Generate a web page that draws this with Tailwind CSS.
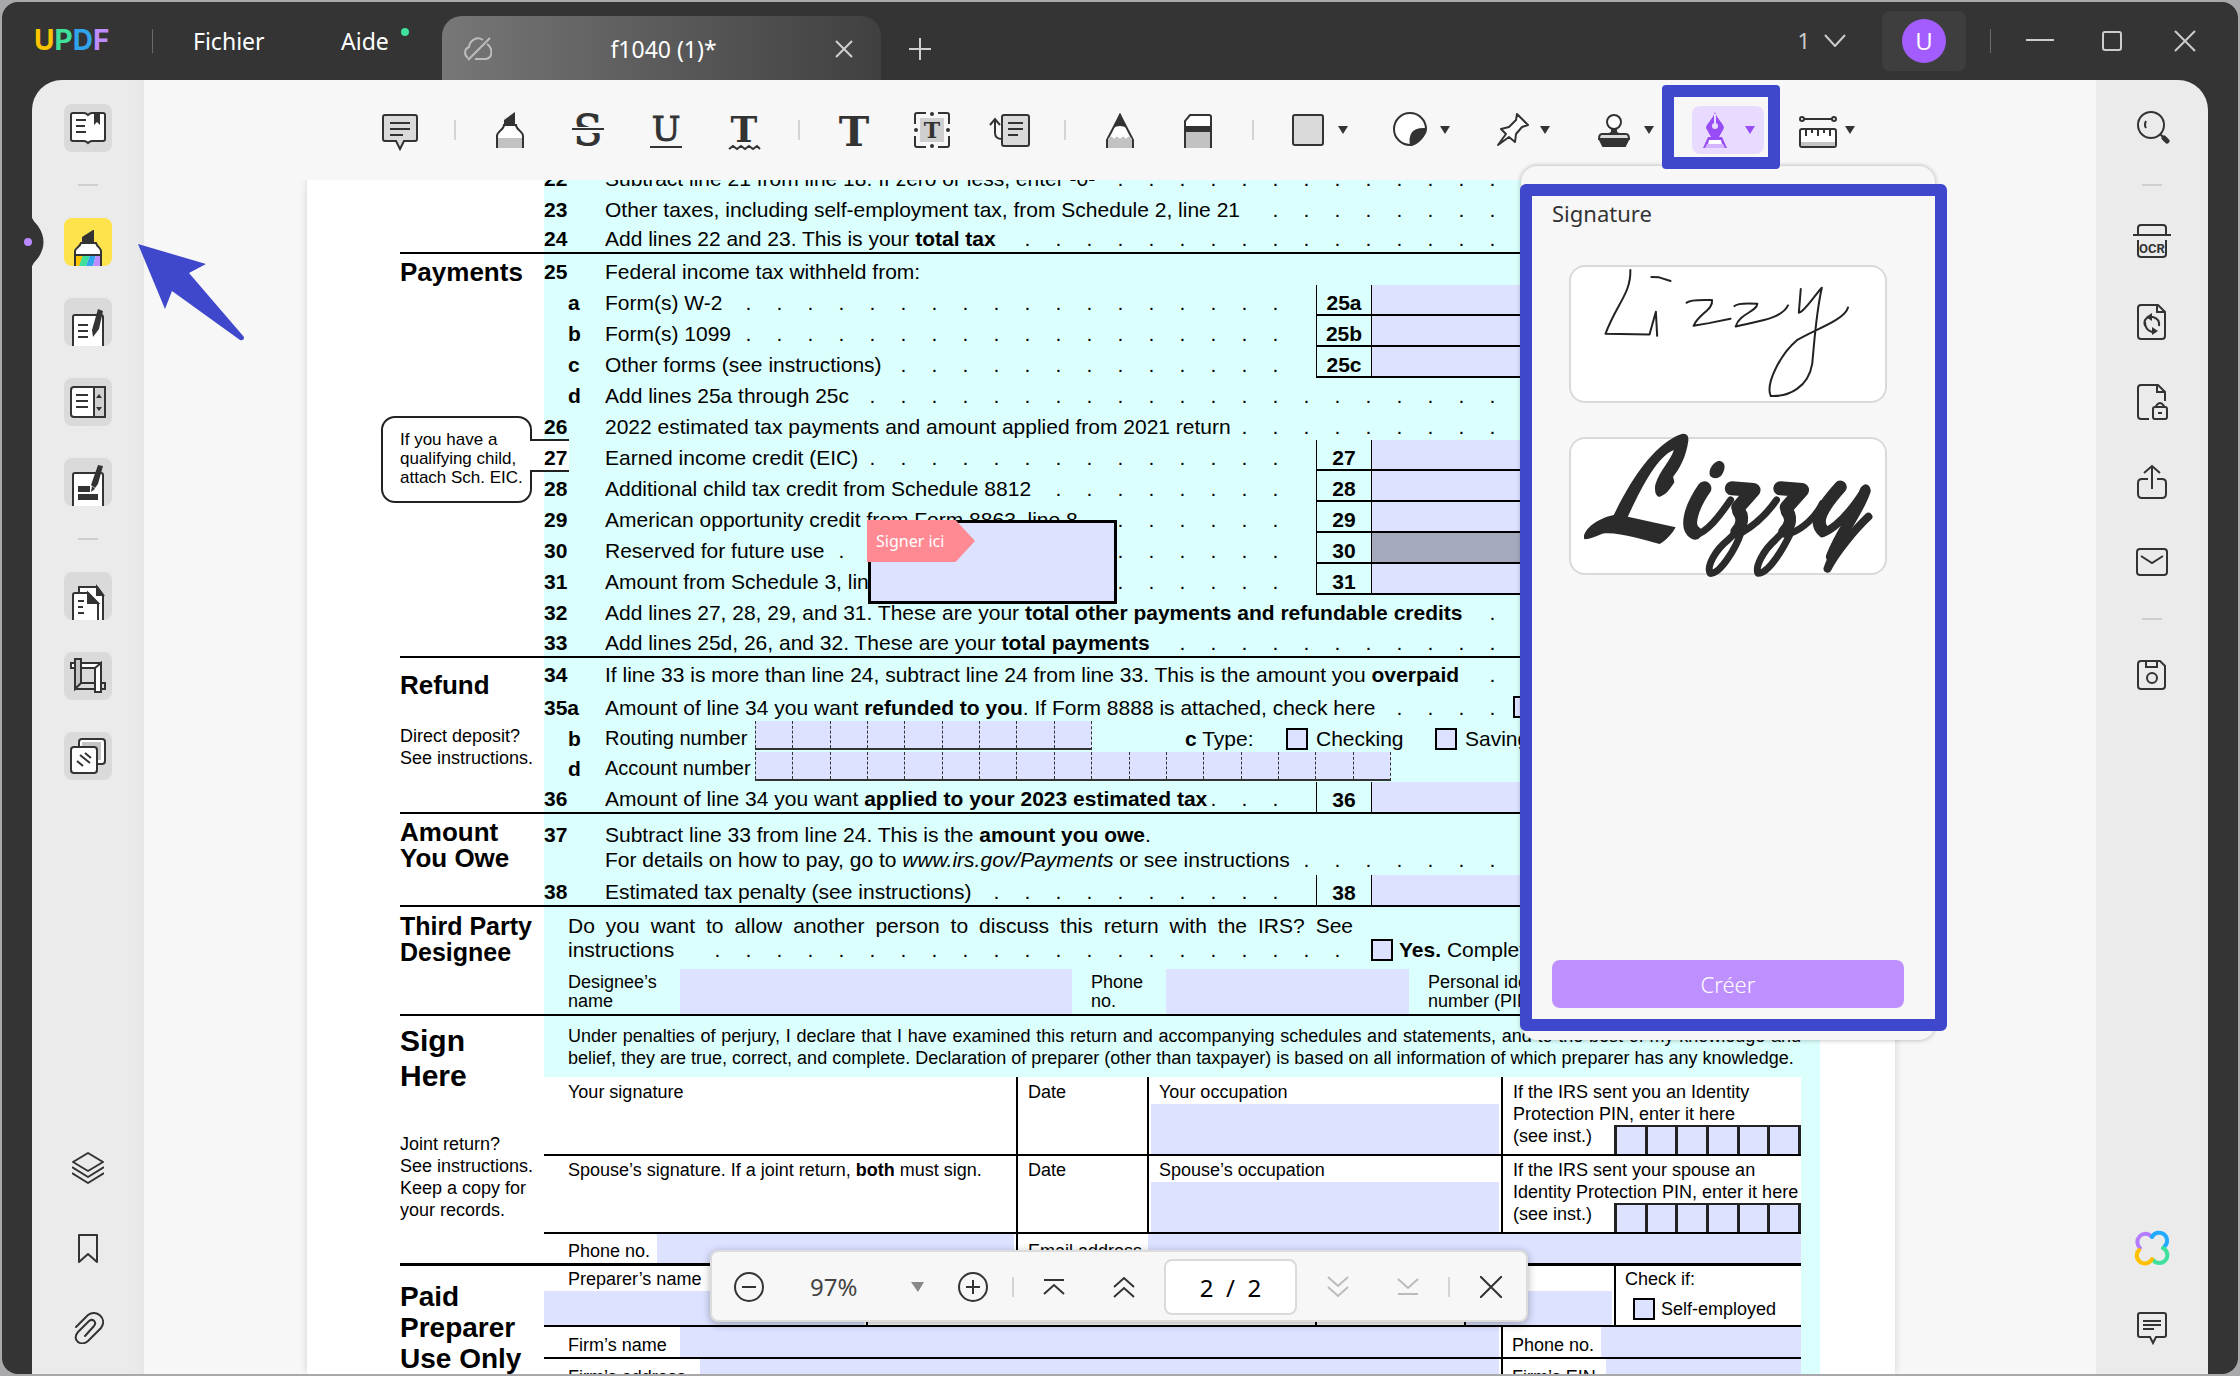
<!DOCTYPE html>
<html lang="fr">
<head>
    <meta charset="UTF-8">
    <meta name="viewport" content="width=device-width, initial-scale=1">
    <title>UPDF - f1040 (1)</title>
    <script src="https://cdn.jsdelivr.net/npm/@tailwindcss/browser@4"></script>
</head>
<body class="h-screen overflow-hidden bg-[#a9a9ab] p-[2px] font-['Noto_Sans',sans-serif] text-[#333]">

<div class="flex h-full flex-col overflow-hidden rounded-2xl bg-[#343434]">

    <!-- Title bar -->
    <header class="flex h-[78px] shrink-0 items-center text-2xl text-white">
        <div class="ml-8 w-[118px] font-['Inter',sans-serif] text-[28px] font-bold" aria-label="UPDF"><span class="text-[#ffc400]">U</span><span class="text-[#3fe09b]">P</span><span class="text-[#30a5ec]">D</span><span class="text-[#bd8cff]">F</span></div>
        <div class="h-6 w-px bg-[#6a6a6a]"></div>
        <button class="ml-10 w-[76px] text-left text-[23px]">Fichier</button>
        <button class="relative ml-[72px] w-[52px] text-left text-[23px]">Aide<span class="absolute -right-4 top-[2px] size-2 rounded-full bg-[#3fe09b]"></span></button>
        <div class="ml-[49px] mt-[14px] flex h-16 w-[439px] items-center self-start rounded-t-[20px] bg-linear-to-r from-[#777] to-[#404040] pl-[22px] pr-7 pt-[2px]">
            <svg class="h-6 w-7" viewBox="0 0 28 24" fill="none" stroke="#bdbdbd" stroke-width="2"><path d="M4 21C0 18 0 12 5 10C6 3 13-1 19 3M23 7C29 11 29 21 22 22H11M26 1L4 23"/></svg>
            <span class="flex-1 text-center text-[23px]">f1040 (1)*</span>
            <button aria-label="Fermer l'onglet"><svg class="size-[18px]" viewBox="0 0 18 18" stroke="#d0d0d0" stroke-width="2"><path d="M1 1l16 16M17 1L1 17"/></svg></button>
        </div>
        <button class="ml-7" aria-label="Nouvel onglet"><svg class="mt-4 size-[22px]" viewBox="0 0 22 22" stroke="#d0d0d0" stroke-width="2"><path d="M11 0v22M0 11h22"/></svg></button>
        <button class="ml-auto flex items-center gap-[14px] text-[22px] text-[#ccc]">1
            <svg class="h-[13px] w-[22px]" viewBox="0 0 22 13" fill="none" stroke="#ccc" stroke-width="2"><path d="M1 1l10 11L21 1"/></svg>
        </button>
        <button class="ml-9 flex h-[60px] w-[84px] items-center justify-center rounded-lg bg-[#3e3e3e]"><span class="size-11 rounded-full bg-[#a35dff] text-center font-['Open_Sans',sans-serif] text-2xl leading-[44px]">U</span></button>
        <div class="ml-6 h-6 w-px bg-[#6a6a6a]"></div>
        <button class="ml-[35px]" aria-label="Réduire"><svg class="h-5 w-7" viewBox="0 0 28 20" stroke="#ccc" stroke-width="2"><path d="M0 9h28"/></svg></button>
        <button class="ml-12" aria-label="Agrandir"><svg class="size-5" viewBox="0 0 20 20" fill="none" stroke="#ccc" stroke-width="2"><rect x="1" y="1" width="18" height="18" rx="2"/></svg></button>
        <button class="ml-[52px] mr-[42px]" aria-label="Fermer"><svg class="size-[22px]" viewBox="0 0 22 22" stroke="#ccc" stroke-width="2"><path d="M1 1l20 20M21 1L1 21"/></svg></button>
    </header>

    <div class="relative mx-[30px] flex min-h-0 flex-1">

        <!-- Left tools -->
        <nav class="flex w-28 shrink-0 flex-col items-center rounded-tl-[30px] bg-linear-to-r from-[#ebebeb] from-90% to-[#e6e6e6] pb-[30px] pt-6">
            <button class="size-12 rounded-lg bg-[#dadada] p-[6px]" aria-label="Lecteur">
                <svg viewBox="0 0 36 36" fill="#fff" stroke="#333" stroke-width="2"><path d="M3 3h11q2 0 4 2q2-2 4-2h11q2 0 2 2v24q0 2-2 2H22q-2 0-4 2q-2-2-4-2H3q-2 0-2-2V5q0-2 2-2z"/><path d="M6 10h10M6 16h9M6 22h10"/><path fill="#333" stroke="none" d="M24 3h6v12l-3-3-3 3z"/></svg>
            </button>
            <div class="my-8 h-[2px] w-5 bg-[#cfcfcf]"></div>
            <div class="flex flex-col gap-8">
                <button class="size-12 overflow-hidden rounded-lg bg-[#ffe34d]" aria-label="Commenter">
                    <svg viewBox="0 0 48 48"><path fill="#333" d="M18 25v-6l11-7h1v13z"/><path fill="#fff" stroke="#333" stroke-width="2" d="M17 25h15c1 4 5 5 5 8v17H11V33c0-3 5-4 6-8z"/><path fill="#ffc400" d="M12 37h8l-4 11h-4z"/><path fill="#3fe09b" d="M19 37h7l-4 11h-7z"/><path fill="#30a5ec" d="M26 37h6l-3 11h-7z"/><path fill="#bd8cff" d="M32 37h4v11h-7z"/><path stroke="#333" stroke-width="2" d="M11 37h26"/></svg>
                </button>
                <button class="size-12 overflow-hidden rounded-lg bg-[#dadada]" aria-label="Modifier">
                    <svg viewBox="0 0 48 48"><path fill="#fff" stroke="#333" stroke-width="2" d="M9 50V19q0-2 2-2h26q2 0 2 2v31"/><path stroke="#333" stroke-width="2" d="M14 27h10M14 33h10M14 39h10"/><path fill="#333" d="M34 11l5 2-4 18-6 8-1-7z"/></svg>
                </button>
                <button class="size-12 rounded-lg bg-[#dadada] p-[6px]" aria-label="Formulaire">
                    <svg viewBox="0 0 36 36" fill="none" stroke="#333" stroke-width="2"><rect x="1" y="3" width="34" height="30" rx="3" fill="#fff"/><path fill="#d0d0d0" d="M24 3h11v30H24z"/><path d="M6 11h12M6 17h12M6 23h12"/><path fill="#333" stroke="none" d="M26 14l3-4 3 4zM26 23l3 4 3-4z"/></svg>
                </button>
                <button class="size-12 overflow-hidden rounded-lg bg-[#dadada]" aria-label="Masquer">
                    <svg viewBox="0 0 48 48"><path fill="#fff" stroke="#333" stroke-width="2" d="M9 50V17q0-2 2-2h26q2 0 2 2v33"/><path fill="#333" d="M14 28h12v6H14zM14 36h20v6H14zM34 7l5 1-5 18-3 4-4-3z"/><path fill="#333" d="M28 28l3 3-4 3z"/></svg>
                </button>
            </div>
            <div class="my-8 h-[2px] w-5 bg-[#cfcfcf]"></div>
            <div class="flex flex-col gap-8">
                <button class="size-12 overflow-hidden rounded-lg bg-[#dadada]" aria-label="Pages">
                    <svg viewBox="0 0 48 48" fill="#fff" stroke="#333" stroke-width="2"><path d="M15 50V15h18l6 8v27z"/><path fill="#333" d="M33 15v8h6z"/><path d="M9 50V23q0-2 2-2h13l10 11v18z"/><path fill="#333" d="M24 21v10h10z"/><path d="M14 29h6M14 35h5M14 41h6"/></svg>
                </button>
                <button class="size-12 rounded-lg bg-[#dadada] p-[6px]" aria-label="Recadrer">
                    <svg viewBox="0 0 36 36" fill="none" stroke="#333" stroke-width="2"><path fill="#fff" d="M1 5h30v5H1z"/><path fill="#dadada" d="M5 25h30v6H5zM11 10h15v15H11z"/><path fill="#c4c4c4" d="M5 1h6v24l-6 6z"/><path fill="#fff" d="M25 10l6-5v29h-6z"/></svg>
                </button>
                <button class="size-12 rounded-lg bg-[#dadada] p-[6px]" aria-label="Filigrane">
                    <svg viewBox="0 0 36 36" fill="#fff" stroke="#333" stroke-width="2"><rect x="9" y="1" width="26" height="25" rx="3"/><path fill="#c4c4c4" stroke="none" d="M12 4h19v18H12z"/><rect x="1" y="9" width="26" height="26" rx="3"/><path d="M10 17l10 8M15 15l6 5M7 23l6 5"/></svg>
                </button>
            </div>
            <div class="mt-auto flex flex-col gap-[48px]">
                <button class="size-8" aria-label="Calques"><svg viewBox="0 0 32 32" fill="none" stroke="#333" stroke-width="2" stroke-linejoin="round"><path d="M16 1l15 9-15 9L1 10zM0 15l16 10 16-10M0 21l16 10 16-10"/></svg></button>
                <button class="size-8" aria-label="Signets"><svg viewBox="0 0 32 32" fill="none" stroke="#333" stroke-width="2" stroke-linejoin="round"><path d="M7 3h18v27l-9-8-9 8z"/></svg></button>
                <button class="size-8" aria-label="Pièces jointes"><svg viewBox="0 0 32 32" fill="none" stroke="#333" stroke-width="2" stroke-linecap="round"><path d="M4 15L16 3c8-6 20 3 13 13L16 29C9 35-1 28 6 20L17 9c4-3 8 1 5 5l-9 10"/></svg></button>
            </div>
        </nav>

        <main class="relative flex min-w-0 flex-1 flex-col overflow-hidden bg-[#f7f7f7]">

            <!-- Comment toolbar -->
            <div class="flex h-[100px] shrink-0 items-center pl-[217px]">
                <button class="flex w-[78px] justify-center" aria-label="Note">
                    <svg class="size-9 overflow-visible" viewBox="0 0 36 36" stroke="#333" stroke-width="2" fill="none"><path fill="#dadada" d="M3 3h30q2 0 2 2v22q0 2-2 2H22l-4 8-4-8H3q-2 0-2-2V5q0-2 2-2z"/><path d="M8 11h20M8 17h20M8 23h13"/></svg>
                </button>
                <div class="mx-[15px] h-5 w-[2px] bg-[#d4d4d4]"></div>
                <button class="flex w-[78px] justify-center" aria-label="Surligner">
                    <svg class="size-9" viewBox="0 0 36 36"><path fill="#fff" stroke="#333" stroke-width="2" d="M12 13h12c0 5 7 6 7 11v13H5V24c0-5 7-6 7-11z"/><path fill="#c2c2c2" d="M6 26h24v10H6z"/><path fill="#333" d="M12 13V8l11-8v13z"/></svg>
                </button>
                <button class="flex w-[78px] justify-center" aria-label="Barrer">
                    <svg class="size-9 overflow-visible" viewBox="0 0 36 36"><text x="18" y="33" text-anchor="middle" font-family="DejaVu Serif" font-size="42" fill="#333" stroke="#333">S</text><path stroke="#f7f7f7" stroke-width="6" d="M0 18h36"/><path stroke="#333" stroke-width="2" d="M2 17h32"/></svg>
                </button>
                <button class="flex w-[78px] justify-center" aria-label="Souligner">
                    <svg class="size-9 overflow-visible" viewBox="0 0 36 36"><text x="18" y="29" text-anchor="middle" font-family="DejaVu Serif" font-size="34" fill="#333" stroke="#333">U</text><path stroke="#333" stroke-width="2" d="M2 35h32"/></svg>
                </button>
                <button class="flex w-[78px] justify-center" aria-label="Ondulé">
                    <svg class="size-9 overflow-visible" viewBox="0 0 36 36"><text x="18" y="30" text-anchor="middle" font-family="DejaVu Serif" font-weight="bold" font-size="36" fill="#333">T</text><path fill="none" stroke="#333" stroke-width="2" d="M3 37l4-3 4 3 4-3 4 3 4-3 4 3 4-3 3 3"/></svg>
                </button>
                <div class="mx-[15px] h-5 w-[2px] bg-[#d4d4d4]"></div>
                <button class="flex w-[78px] justify-center" aria-label="Texte">
                    <svg class="size-9 overflow-visible" viewBox="0 0 36 36"><text x="18" y="34" text-anchor="middle" font-family="DejaVu Serif" font-weight="bold" font-size="41" fill="#333">T</text></svg>
                </button>
                <button class="flex w-[78px] justify-center" aria-label="Zone de texte">
                    <svg class="size-9 overflow-visible" viewBox="0 0 36 36" fill="none" stroke="#333" stroke-width="2"><path fill="#cfcfcf" stroke="none" d="M6 6h24v24H6z"/><path d="M1 12V3q0-2 2-2h9M24 1h9q2 0 2 2v9M35 24v9q0 2-2 2h-9M12 35H3q-2 0-2-2v-9"/><g fill="#333" stroke="none"><circle cx="18" cy="2" r="2"/><circle cx="18" cy="34" r="2"/><circle cx="2" cy="18" r="2"/><circle cx="34" cy="18" r="2"/><text x="18" y="26" text-anchor="middle" font-family="DejaVu Serif" font-weight="bold" font-size="22">T</text></g></svg>
                </button>
                <button class="flex w-[78px] justify-center" aria-label="Légende">
                    <svg class="h-9 w-10 overflow-visible" viewBox="0 0 40 36" fill="none" stroke="#333" stroke-width="2"><rect x="12" y="3" width="27" height="31" rx="2" fill="#dadada"/><path d="M18 11h15M18 17h15M18 23h10M0 13l5-6 5 6M5 7v14q0 6 7 6"/></svg>
                </button>
                <div class="mx-[15px] h-5 w-[2px] bg-[#d4d4d4]"></div>
                <button class="flex w-[78px] justify-center" aria-label="Crayon">
                    <svg class="size-9" viewBox="0 0 36 36"><path fill="#fff" stroke="#333" stroke-width="2" d="M18 3l13 25v9H5v-9z"/><path fill="#c2c2c2" d="M6 27q3-5 6 0q3-5 6 0q3-5 6 0q3-5 6 0v9H6z"/><path fill="#333" d="M18 1l7 15q-7-4-14 0z"/></svg>
                </button>
                <button class="flex w-[78px] justify-center" aria-label="Gomme">
                    <svg class="size-9" viewBox="0 0 36 36"><path fill="#fff" stroke="#333" stroke-width="2" d="M5 37V9l5-6h19q2 0 2 2v32z"/><path fill="#333" d="M4 14h28v6H4z"/><path fill="#c2c2c2" d="M6 20h24v16H6z"/></svg>
                </button>
                <div class="mx-[15px] h-5 w-[2px] bg-[#d4d4d4]"></div>
                <button class="flex w-[102px] items-center gap-3 pl-[21px]" aria-label="Formes">
                    <svg class="size-9" viewBox="0 0 36 36"><rect x="3" y="3" width="30" height="30" rx="2" fill="#dadada" stroke="#333" stroke-width="2"/></svg>
                    <svg class="h-2 w-[10px]" viewBox="0 0 10 8" fill="#333"><path d="M0 0h10L5 8z"/></svg>
                </button>
                <button class="flex w-[102px] items-center gap-3 pl-[21px]" aria-label="Autocollants">
                    <svg class="size-9" viewBox="0 0 36 36"><path fill="#fff" stroke="#333" stroke-width="2" d="M18 1a16 16 0 0 1 16 16c0 6-10 16-16 16a16 16 0 0 1 0-32z"/><path fill="#333" d="M34 16c-14-1-18 6-16 18c8-1 16-9 16-18z"/></svg>
                    <svg class="h-2 w-[10px]" viewBox="0 0 10 8" fill="#333"><path d="M0 0h10L5 8z"/></svg>
                </button>
                <button class="flex w-[102px] items-center gap-[10px] pl-[21px]" aria-label="Épingle">
                    <svg class="size-9" viewBox="0 0 36 36" fill="#fff" stroke="#333" stroke-width="2" stroke-linejoin="round"><path d="M23 2l11 11-6 2-6 7-1 8-6-5-11 8 8-11-5-5 8-2 7-7z"/></svg>
                    <svg class="h-2 w-[10px]" viewBox="0 0 10 8" fill="#333"><path d="M0 0h10L5 8z"/></svg>
                </button>
                <button class="flex w-[102px] items-center gap-3 pl-[21px]" aria-label="Tampon">
                    <svg class="size-9" viewBox="0 0 36 36" stroke="#333" stroke-width="2"><circle cx="18" cy="10" r="7" fill="#fff"/><path fill="#333" d="M16 17h4v2q0 3 5 3H11q5 0 5-3z"/><path fill="#dadada" d="M6 22h24q3 0 3 5H3q0-5 3-5z"/><path fill="#333" d="M4 28h28l-3 6H7z"/></svg>
                    <svg class="h-2 w-[10px]" viewBox="0 0 10 8" fill="#333"><path d="M0 0h10L5 8z"/></svg>
                </button>
                <button class="flex w-[102px] items-center pl-[15px]" aria-label="Signature">
                    <span class="flex h-12 w-[72px] items-center gap-3 rounded-lg bg-[#e9dbff] pl-[5px]">
                        <svg class="size-9" viewBox="0 0 36 36" fill="#984cf5"><path d="M18 0c2 7 9 12 9 16l-5 9h-8l-5-9c0-4 7-9 9-16z"/><path stroke="#e9dbff" stroke-width="2" d="M18 2v11"/><circle cx="18" cy="14" r="3" fill="#e9dbff"/><path d="M11 25h14l5 11H6z"/><path fill="#fff" d="M12 28h12l1 4H11z"/><path fill="#d4b3ff" d="M10 32h16l2 4H8z"/></svg>
                        <svg class="h-2 w-[10px]" viewBox="0 0 10 8" fill="#984cf5"><path d="M0 0h10L5 8z"/></svg>
                    </span>
                </button>
                <button class="flex items-center gap-2 pl-[20px]" aria-label="Mesurer">
                    <svg class="h-9 w-[38px]" viewBox="0 0 38 36" fill="none" stroke="#333" stroke-width="2"><path d="M4 7h30"/><circle cx="3" cy="7" r="2" fill="#fff"/><circle cx="35" cy="7" r="2" fill="#fff"/><rect x="1" y="17" width="36" height="18" rx="2" fill="#fff"/><path fill="#c4c4c4" stroke="none" d="M2 30h34v4H2z"/><path d="M7 17v7M13 17v4M19 17v7M25 17v4M31 17v7"/></svg>
                    <svg class="h-2 w-[10px]" viewBox="0 0 10 8" fill="#333"><path d="M0 0h10L5 8z"/></svg>
                </button>
            </div>

            <!-- Form 1040, page 2 -->
            <div class="min-h-0 flex-1 overflow-hidden pl-[163px] pr-[201px]">
                <article lang="en" class="relative h-full overflow-hidden bg-white pl-[93px] pr-[75px] font-['Liberation_Sans',Arial,sans-serif] text-[21px] leading-[27px] text-black shadow-[0_0_8px_rgba(0,0,0,0.14)]">

                    <section class="-mt-[19px] flex border-b-2 whitespace-nowrap">
                        <div class="w-36 shrink-0"></div>
                        <div class="min-w-0 flex-1 bg-[#dbfffc]">
                            <div class="flex h-[31px] items-end"><b class="w-[61px] shrink-0">22</b>Subtract line 21 from line 18. If zero or less, enter -0-<span class="ml-auto mr-[312px] flex min-w-0 justify-end overflow-hidden" data-dots="13"></span></div>
                            <div class="flex h-[31px] items-end"><b class="w-[61px] shrink-0">23</b>Other taxes, including self-employment tax, from Schedule 2, line 21<span class="ml-auto mr-[312px] flex min-w-0 justify-end overflow-hidden" data-dots="8"></span></div>
                            <div class="flex h-[29px] items-end"><b class="w-[61px] shrink-0">24</b><p>Add lines 22 and 23. This is your <b>total tax</b></p><span class="ml-auto mr-[312px] flex min-w-0 justify-end overflow-hidden" data-dots="16"></span></div>
                        </div>
                    </section>

                    <section class="relative flex border-b-2 whitespace-nowrap">
                        <h2 class="w-36 shrink-0 pt-[5px] text-[26px] font-bold">Payments</h2>
                        <div class="min-w-0 flex-1 bg-[#dbfffc]">
                            <div class="flex h-[31px] items-end"><b class="w-[61px] shrink-0">25</b>Federal income tax withheld from:</div>
                            <div class="flex h-[31px] items-end"><b class="w-[61px] shrink-0 pl-6">a</b>Form(s) W-2<span class="ml-auto mr-[25px] flex min-w-0 justify-end overflow-hidden" data-dots="18"></span><b class="w-14 shrink-0 self-stretch border-x border-b-2 pt-[4px] text-center">25a</b><input aria-label="25a" class="w-[448px] shrink-0 self-stretch border-b-2 border-black bg-[#dce2ff]"></div>
                            <div class="flex h-[31px] items-end"><b class="w-[61px] shrink-0 pl-6">b</b>Form(s) 1099<span class="ml-auto mr-[25px] flex min-w-0 justify-end overflow-hidden" data-dots="18"></span><b class="w-14 shrink-0 self-stretch border-x border-b-2 pt-[4px] text-center">25b</b><input aria-label="25b" class="w-[448px] shrink-0 self-stretch border-b-2 border-black bg-[#dce2ff]"></div>
                            <div class="flex h-[31px] items-end"><b class="w-[61px] shrink-0 pl-6">c</b>Other forms (see instructions)<span class="ml-auto mr-[25px] flex min-w-0 justify-end overflow-hidden" data-dots="13"></span><b class="w-14 shrink-0 self-stretch border-x border-b-2 pt-[4px] text-center">25c</b><input aria-label="25c" class="w-[448px] shrink-0 self-stretch border-b-2 border-black bg-[#dce2ff]"></div>
                            <div class="flex h-[31px] items-end"><b class="w-[61px] shrink-0 pl-6">d</b>Add lines 25a through 25c<span class="ml-auto mr-[312px] flex min-w-0 justify-end overflow-hidden" data-dots="21"></span></div>
                            <div class="flex h-[31px] items-end"><b class="w-[61px] shrink-0">26</b>2022 estimated tax payments and amount applied from 2021 return<span class="ml-auto mr-[312px] flex min-w-0 justify-end overflow-hidden" data-dots="9"></span></div>
                            <div class="flex h-[31px] items-end"><b class="w-[61px] shrink-0">27</b>Earned income credit (EIC)<span class="ml-auto mr-[25px] flex min-w-0 justify-end overflow-hidden" data-dots="14"></span><b class="w-14 shrink-0 self-stretch border-x border-b-2 pt-[4px] text-center">27</b><input aria-label="27" class="w-[448px] shrink-0 self-stretch border-b-2 border-black bg-[#dce2ff]"></div>
                            <div class="flex h-[31px] items-end"><b class="w-[61px] shrink-0">28</b>Additional child tax credit from Schedule 8812<span class="ml-auto mr-[25px] flex min-w-0 justify-end overflow-hidden" data-dots="8"></span><b class="w-14 shrink-0 self-stretch border-x border-b-2 pt-[4px] text-center">28</b><input aria-label="28" class="w-[448px] shrink-0 self-stretch border-b-2 border-black bg-[#dce2ff]"></div>
                            <div class="flex h-[31px] items-end"><b class="w-[61px] shrink-0">29</b>American opportunity credit from Form 8863, line 8<span class="ml-auto mr-[25px] flex min-w-0 justify-end overflow-hidden" data-dots="6"></span><b class="w-14 shrink-0 self-stretch border-x border-b-2 pt-[4px] text-center">29</b><input aria-label="29" class="w-[448px] shrink-0 self-stretch border-b-2 border-black bg-[#dce2ff]"></div>
                            <div class="flex h-[31px] items-end"><b class="w-[61px] shrink-0">30</b>Reserved for future use<span class="ml-auto mr-[25px] flex min-w-0 justify-end overflow-hidden" data-dots="15"></span><b class="w-14 shrink-0 self-stretch border-x border-b-2 pt-[4px] text-center">30</b><div class="w-[448px] shrink-0 self-stretch border-b-2 bg-[#a4a9bd]"></div></div>
                            <div class="flex h-[31px] items-end"><b class="w-[61px] shrink-0">31</b>Amount from Schedule 3, line 15<span class="ml-auto mr-[25px] flex min-w-0 justify-end overflow-hidden" data-dots="11"></span><b class="w-14 shrink-0 self-stretch border-x border-b-2 pt-[4px] text-center">31</b><input aria-label="31" class="w-[448px] shrink-0 self-stretch border-b-2 border-black bg-[#dce2ff]"></div>
                            <div class="flex h-[31px] items-end"><b class="w-[61px] shrink-0">32</b><p>Add lines 27, 28, 29, and 31. These are your <b>total other payments and refundable credits</b></p><span class="ml-auto mr-[312px] flex min-w-0 justify-end overflow-hidden" data-dots="1"></span></div>
                            <div class="flex h-[30px] items-end"><b class="w-[61px] shrink-0">33</b><p>Add lines 25d, 26, and 32. These are your <b>total payments</b></p><span class="ml-auto mr-[312px] flex min-w-0 justify-end overflow-hidden" data-dots="11"></span></div>
                        </div>

                        <!-- EIC callout, its tail runs to line 27 -->
                        <div class="absolute -left-[19px] top-[162px] h-[87px] w-[151px] rounded-[14px] border-2 border-[#222] bg-white pl-[17px] pt-[12px] text-[17px] leading-[19px]">If you have a<br>qualifying child,<br>attach Sch. EIC.</div>
                        <div class="absolute left-[130px] top-[185px] h-[33px] w-[39px] border-y-2 border-[#222] bg-white pl-[14px] pt-[3px] font-bold">27</div>

                        <!-- Signature field -->
                        <div class="absolute left-[468px] top-[266px] h-[84px] w-[249px] border-3 bg-[#dce2ff]"></div>
                        <div class="absolute left-[467px] top-[266px] h-[42px] w-[108px] bg-[#ff8a94] pl-[9px] font-['Noto_Sans',sans-serif] text-base leading-[42px] text-white [clip-path:polygon(0_0,82%_0,100%_50%,82%_100%,0_100%)]">Signer ici</div>
                    </section>

                    <section class="flex border-b-2 whitespace-nowrap">
                        <div class="w-36 shrink-0">
                            <h2 class="pt-[14px] text-[26px] font-bold">Refund</h2>
                            <p class="pt-[26px] text-lg leading-[22px]">Direct deposit?<br>See instructions.</p>
                        </div>
                        <div class="min-w-0 flex-1 bg-[#dbfffc]">
                            <div class="flex h-8 items-center"><b class="w-[61px] shrink-0">34</b><p>If line 33 is more than line 24, subtract line 24 from line 33. This is the amount you <b>overpaid</b></p><span class="ml-auto mr-[312px] flex min-w-0 justify-end overflow-hidden" data-dots="1"></span></div>
                            <div class="flex h-[31px] items-end"><b class="w-[61px] shrink-0">35a</b><p>Amount of line 34 you want <b>refunded to you</b>. If Form 8888 is attached, check here</p><span class="ml-auto mr-[5px] flex min-w-0 justify-end overflow-hidden" data-dots="4"></span><input type="checkbox" aria-label="Form 8888" class="mb-[3px] mr-[285px] size-[22px] shrink-0 appearance-none border-2 bg-[#dce2ff]"></div>
                            <div class="flex h-[31px] items-end">
                                <b class="w-[61px] shrink-0 pl-6">b</b><span class="w-[150px] text-xl leading-[27px]">Routing number</span>
                                <div class="grid h-[29px] w-[337px] grid-cols-9 self-start border-b-2 border-r border-[#333] bg-[#dce2ff] [border-right-style:dashed]" data-cells="9"></div>
                                <p class="ml-[93px] w-[101px]"><b>c</b> Type:</p>
                                <label class="flex w-[149px] items-center gap-2"><input type="checkbox" class="size-[22px] appearance-none border-2 bg-[#dce2ff]">Checking</label>
                                <label class="flex items-center gap-2"><input type="checkbox" class="size-[22px] appearance-none border-2 bg-[#dce2ff]">Savings</label>
                            </div>
                            <div class="flex h-[30px] items-end">
                                <b class="w-[61px] shrink-0 pl-6">d</b><span class="w-[150px] text-xl leading-[27px]">Account number</span>
                                <div class="grid h-[29px] w-[636px] grid-cols-17 self-start border-b-2 border-r border-[#333] bg-[#dce2ff] [border-right-style:dashed]" data-cells="17"></div>
                            </div>
                            <div class="flex h-[30px] items-end"><b class="w-[61px] shrink-0">36</b><p>Amount of line 34 you want <b>applied to your 2023 estimated tax</b></p><span class="ml-auto mr-[25px] flex min-w-0 justify-end overflow-hidden" data-dots="3"></span><b class="w-14 shrink-0 self-stretch border-x pt-[4px] text-center">36</b><input aria-label="36" class="w-[448px] shrink-0 self-stretch bg-[#dce2ff]"></div>
                        </div>
                    </section>

                    <section class="flex border-b-2 whitespace-nowrap">
                        <h2 class="w-36 shrink-0 pt-[5px] text-[26px] font-bold leading-[26px]">Amount<br>You Owe</h2>
                        <div class="min-w-0 flex-1 bg-[#dbfffc] pt-[8px]">
                            <div class="flex h-[25px] items-center"><b class="w-[61px] shrink-0">37</b><p>Subtract line 33 from line 24. This is the <b>amount you owe</b>.</p></div>
                            <div class="mb-[3px] flex h-[25px] items-center pl-[61px]"><p>For details on how to pay, go to <i>www.irs.gov/Payments</i> or see instructions</p><span class="ml-auto mr-[312px] flex min-w-0 justify-end overflow-hidden" data-dots="7"></span></div>
                            <div class="flex h-[30px] items-end"><b class="w-[61px] shrink-0">38</b>Estimated tax penalty (see instructions)<span class="ml-auto mr-[25px] flex min-w-0 justify-end overflow-hidden" data-dots="10"></span><b class="w-14 shrink-0 self-stretch border-x pt-[4px] text-center">38</b><input aria-label="38" class="w-[448px] shrink-0 self-stretch bg-[#dce2ff]"></div>
                        </div>
                    </section>

                    <section class="flex border-b-2 whitespace-nowrap">
                        <h2 class="w-36 shrink-0 pt-[6px] text-[25px] font-bold leading-[26px]">Third Party<br>Designee</h2>
                        <div class="min-w-0 flex-1 bg-[#dbfffc] pl-6 pt-[7px] leading-[24px]">
                            <div class="flex">
                                <div class="w-[785px] shrink-0">
                                    <p class="[text-align-last:justify]">Do you want to allow another person to discuss this return with the IRS? See</p>
                                    <div class="flex">instructions<span class="ml-auto flex" data-dots="21"></span></div>
                                </div>
                                <label class="ml-[18px] flex items-center gap-[6px] self-end"><input type="checkbox" class="size-[22px] appearance-none border-2 bg-[#dce2ff]"><span><b>Yes.</b> Complete below.</span></label>
                            </div>
                            <div class="mt-[7px] flex h-[45px] items-center text-lg leading-[19px]">
                                <label for="designee" class="w-28">Designee’s<br>name</label>
                                <input id="designee" class="h-full w-[392px] bg-[#dce2ff]">
                                <label for="dphone" class="w-[94px] pl-[19px]">Phone<br>no.</label>
                                <input id="dphone" class="h-full w-[243px] bg-[#dce2ff]">
                                <p class="pl-[19px]">Personal identification<br>number (PIN)</p>
                            </div>
                        </div>
                    </section>

                    <!-- Sign here -->
                    <div class="border-r-[19px] border-[#dbfffc] text-lg leading-[22px]">
                        <section class="flex border-b-3 border-black">
                            <div class="w-36 shrink-0">
                                <h2 class="pt-[7px] text-[30px] font-bold leading-[35px]">Sign<br>Here</h2>
                                <p class="pt-[40px] whitespace-nowrap">Joint return?<br>See instructions.<br>Keep a copy for<br>your records.</p>
                            </div>
                            <div class="min-w-0 flex-1 whitespace-nowrap">
                                <div class="h-[61px] bg-[#dbfffc] pl-6 pt-[9px]">
                                    <p class="[text-align-last:justify]">Under penalties of perjury, I declare that I have examined this return and accompanying schedules and statements, and to the best of my knowledge and</p>
                                    <p>belief, they are true, correct, and complete. Declaration of preparer (other than taxpayer) is based on all information of which preparer has any knowledge.</p>
                                </div>
                                <div class="flex h-[79px] border-b-2">
                                    <p class="w-[474px] border-r-2 pl-6 pt-[4px]">Your signature</p>
                                    <p class="w-[131px] border-r-2 pl-[10px] pt-[4px]">Date</p>
                                    <div class="flex min-w-0 flex-1 flex-col border-r-2 pt-[4px]"><label for="occ" class="h-[23px] pl-[10px]">Your occupation</label><input id="occ" class="mx-[2px] min-w-0 flex-1 bg-[#dce2ff]"></div>
                                    <div class="flex w-[298px] flex-col pl-[10px] pt-[4px]"><p>If the IRS sent you an Identity<br>Protection PIN, enter it here</p><div class="flex flex-1 justify-between">(see inst.)<div class="grid w-[187px] grid-cols-6 border-r-3 border-t-2 border-[#222] bg-[#dce2ff]" data-pin="6"></div></div></div>
                                </div>
                                <div class="flex h-[78px] border-b-2">
                                    <p class="w-[474px] border-r-2 pl-6 pt-[3px]">Spouse’s signature. If a joint return, <b>both</b> must sign.</p>
                                    <p class="w-[131px] border-r-2 pl-[10px] pt-[3px]">Date</p>
                                    <div class="flex min-w-0 flex-1 flex-col border-r-2 pt-[3px]"><label for="socc" class="h-[23px] pl-[10px]">Spouse’s occupation</label><input id="socc" class="mx-[2px] min-w-0 flex-1 bg-[#dce2ff]"></div>
                                    <div class="flex w-[298px] flex-col pl-[10px] pt-[3px]"><p>If the IRS sent your spouse an<br>Identity Protection PIN, enter it here</p><div class="flex flex-1 justify-between">(see inst.)<div class="grid w-[187px] grid-cols-6 border-r-3 border-t-2 border-[#222] bg-[#dce2ff]" data-pin="6"></div></div></div>
                                </div>
                                <div class="flex h-[29px]">
                                    <label for="ph" class="w-[113px] pl-6 pt-[6px]">Phone no.</label>
                                    <input id="ph" class="w-[357px] bg-[#dce2ff]">
                                    <label for="em" class="ml-[2px] w-[132px] border-l-2 pl-[10px] pt-[6px]">Email address</label>
                                    <input id="em" class="min-w-0 flex-1 bg-[#dce2ff]">
                                </div>
                            </div>
                        </section>

                        <section class="flex">
                            <h2 class="w-36 shrink-0 pt-[15px] text-[28px] font-bold leading-[31px] whitespace-nowrap">Paid<br>Preparer<br>Use Only</h2>
                            <div class="min-w-0 flex-1 whitespace-nowrap">
                                <div class="flex h-[61px] border-b-2">
                                    <div class="flex w-[324px] shrink-0 flex-col border-r-2 pr-[2px] pt-[2px]"><label for="pn" class="h-[23px] pl-6">Preparer’s name</label><input id="pn" class="min-w-0 flex-1 bg-[#dce2ff]"></div>
                                    <p class="w-[449px] shrink-0 border-r-2 pl-[10px] pt-[2px]">Preparer’s signature</p>
                                    <p class="w-[149px] shrink-0 border-r-2 pl-[10px] pt-[2px]">Date</p>
                                    <div class="flex min-w-0 flex-1 flex-col border-r-2 pr-[2px] pt-[2px]"><label for="ptin" class="h-[23px] pl-[10px]">PTIN</label><input id="ptin" class="min-w-0 flex-1 bg-[#dce2ff]"></div>
                                    <div class="w-[185px] shrink-0 pl-[9px] pt-[2px]"><p>Check if:</p><label class="mt-[8px] flex items-center gap-[6px] pl-[8px]"><input type="checkbox" class="size-[22px] appearance-none border-2 bg-[#dce2ff]">Self-employed</label></div>
                                </div>
                                <div class="flex h-8 border-b-2">
                                    <label for="fn" class="w-[136px] pl-6 pt-[7px]">Firm’s name</label>
                                    <input id="fn" class="mr-[2px] min-w-0 flex-1 bg-[#dce2ff]">
                                    <label for="fp" class="w-[100px] border-l-2 pl-[9px] pt-[7px]">Phone no.</label>
                                    <input id="fp" class="w-[200px] bg-[#dce2ff]">
                                </div>
                                <div class="flex h-8">
                                    <label for="fa" class="w-[156px] pl-6 pt-[7px]">Firm’s address</label>
                                    <input id="fa" class="mr-[2px] min-w-0 flex-1 bg-[#dce2ff]">
                                    <label for="fe" class="w-[105px] border-l-2 pl-[9px] pt-[7px]">Firm’s EIN</label>
                                    <input id="fe" class="w-[195px] bg-[#dce2ff]">
                                </div>
                            </div>
                        </section>
                    </div>
                </article>
            </div>

            <!-- Signature panel -->
            <aside class="absolute left-[1377px] top-[86px] flex h-[874px] w-[414px] flex-col rounded-2xl bg-[#f7f7f7] px-[31px] pb-8 pt-[33px] shadow-[0_0_5px_rgba(0,0,0,0.3)]">
                <h3 class="text-[22px] leading-7">Signature</h3>
                <div class="mx-auto mt-[38px] flex flex-col gap-[34px]">
                    <button class="h-[138px] w-[318px] rounded-2xl border-2 border-[#dadada] bg-white" aria-label="Signature manuscrite">
                        <svg class="h-full w-full" viewBox="896 291 492 401" preserveAspectRatio="none" fill="none" stroke="#222" stroke-width="2">
                            <g stroke-linecap="round" stroke-linejoin="round">
                                <path vector-effect="non-scaling-stroke" d="M989 300C990 370 968 400 950 491L1019 493L1029 425L1031 497"/>
                                <path vector-effect="non-scaling-stroke" d="M1022 321L1034 322L1052 333"/>
                                <path vector-effect="non-scaling-stroke" d="M1077 398Q1082 388 1117 390C1119 420 1096 430 1088 467L1112 459L1146 446"/>
                                <path vector-effect="non-scaling-stroke" d="M1152 408Q1158 397 1188 401C1187 425 1160 430 1154 469C1180 455 1225 450 1236 406"/>
                                <path vector-effect="non-scaling-stroke" d="M1256 357L1253 428C1262 425 1280 370 1289 353C1280 430 1278 500 1274 580C1268 650 1238 680 1209 677C1200 640 1225 550 1250 510C1275 480 1325 450 1330 412"/>
                            </g>
                        </svg>
                    </button>
                    <button class="h-[138px] w-[318px] rounded-2xl border-2 border-[#dadada] bg-white" aria-label="Signature au pinceau">
                        <svg class="h-full w-full overflow-visible" viewBox="896 807 492 402" preserveAspectRatio="none" fill="none" stroke="#2b2b2b">
                            <g stroke-linecap="round" stroke-linejoin="round">
                                <path fill="#2b2b2b" stroke="none" d="M963 1035C985 950 1015 850 1055 805Q1080 775 1080 810C1077 860 1065 900 1056 920L1058 937C1050 960 1045 975 1034 981Q1026 975 1028 945C1035 900 1053 870 1057 840C1030 860 1005 960 985 1040L1060 1072C1055 1090 1045 1112 1035 1122C1010 1110 970 1085 945 1091Q925 1108 917 1108C912 1085 935 1045 963 1035z"/>
                                <path fill="#2b2b2b" stroke="none" d="M1128 872C1140 875 1138 900 1131 918Q1122 932 1114 918C1110 900 1119 875 1128 872z"/>
                                <path vector-effect="non-scaling-stroke" stroke-width="14" d="M1105 955C1085 1010 1075 1070 1090 1088"/>
                                <path vector-effect="non-scaling-stroke" stroke-width="7" d="M1090 1096C1110 1085 1128 1040 1146 990M1160 1012C1180 1050 1158 1080 1142 1110C1122 1140 1108 1190 1114 1210C1130 1214 1155 1130 1162 1090C1180 1070 1200 1040 1218 990M1236 1014C1255 1050 1230 1080 1216 1110C1198 1140 1184 1190 1189 1210C1206 1212 1230 1130 1240 1090C1260 1075 1280 1040 1290 1000"/>
                                <path vector-effect="non-scaling-stroke" stroke-width="14" d="M1148 955L1182 960L1158 1012M1224 955L1258 960L1234 1012"/>
                                <path vector-effect="non-scaling-stroke" stroke-width="12" d="M1158 1025Q1170 1055 1155 1085M1234 1025Q1246 1055 1230 1085"/>
                                <path vector-effect="non-scaling-stroke" stroke-width="13" d="M1318 951C1295 1000 1275 1050 1290 1080"/>
                                <path vector-effect="non-scaling-stroke" stroke-width="8" d="M1290 1090C1315 1070 1340 1010 1358 955C1345 1020 1310 1130 1298 1196C1310 1150 1340 1080 1362 1040"/>
                                <path vector-effect="non-scaling-stroke" stroke-width="11" d="M1357 962C1345 1030 1320 1080 1304 1160"/>
                            </g>
                        </svg>
                    </button>
                </div>
                <button class="mt-auto h-12 rounded-lg bg-[#be8fff] text-[22px] font-light text-white">Créer</button>
            </aside>

            <!-- Annotation frames -->
            <div class="pointer-events-none absolute left-[1376px] top-[104px] h-[847px] w-[427px] rounded-[6px] border-12 border-[#3f47cc]"></div>
            <div class="pointer-events-none absolute left-[1518px] top-[5px] h-[84px] w-[118px] rounded-[4px] border-12 border-[#3f47cc]"></div>

            <!-- Zoom and page bar -->
            <div class="absolute bottom-[52px] left-[566px] flex h-[72px] w-[818px] items-center rounded-lg border-2 border-[#dcdcdc] bg-[#f7f7f7] pl-[22px] pt-[2px] shadow-[0_2px_8px_rgba(0,0,0,0.3)]">
                <button aria-label="Zoom arrière"><svg class="size-[30px]" viewBox="0 0 30 30" fill="none" stroke="#333" stroke-width="2"><circle cx="15" cy="15" r="14"/><path d="M8 15h14"/></svg></button>
                <span class="ml-[46px] w-[101px] text-2xl text-[#444]">97%</span>
                <button aria-label="Choisir le zoom"><svg class="h-[10px] w-[13px]" viewBox="0 0 13 10" fill="#888"><path d="M0 0h13L7 10z"/></svg></button>
                <button class="ml-[34px]" aria-label="Zoom avant"><svg class="size-[30px]" viewBox="0 0 30 30" fill="none" stroke="#333" stroke-width="2"><circle cx="15" cy="15" r="14"/><path d="M8 15h14M15 8v14"/></svg></button>
                <div class="ml-6 h-5 w-[2px] bg-[#d4d4d4]"></div>
                <button class="ml-7" aria-label="Première page"><svg class="h-[22px] w-6" viewBox="0 0 24 22" fill="none" stroke="#333" stroke-width="2"><path d="M2 4h20M2 18l10-9 10 9"/></svg></button>
                <button class="ml-[46px]" aria-label="Page précédente"><svg class="h-[22px] w-6" viewBox="0 0 24 22" fill="none" stroke="#333" stroke-width="2"><path d="M2 11l10-9 10 9M2 21l10-9 10 9"/></svg></button>
                <input aria-label="Page" value="2  /  2" class="ml-7 h-14 w-[133px] rounded-lg border-2 border-[#dadada] bg-white text-center text-2xl text-black">
                <button class="ml-[29px]" aria-label="Page suivante"><svg class="h-[22px] w-6" viewBox="0 0 24 22" fill="none" stroke="#bbb" stroke-width="2"><path d="M2 1l10 9 10-9M2 11l10 9 10-9"/></svg></button>
                <button class="ml-[46px]" aria-label="Dernière page"><svg class="h-[22px] w-6" viewBox="0 0 24 22" fill="none" stroke="#bbb" stroke-width="2"><path d="M2 3l10 9 10-9M2 18h20"/></svg></button>
                <div class="ml-7 h-5 w-[2px] bg-[#d4d4d4]"></div>
                <button class="ml-[30px]" aria-label="Fermer la barre"><svg class="size-[22px]" viewBox="0 0 22 22" stroke="#333" stroke-width="2"><path d="M0 0l22 22M22 0L0 22"/></svg></button>
            </div>
        </main>

        <!-- Right tools -->
        <nav class="flex w-28 shrink-0 flex-col items-center rounded-tr-[30px] bg-[#ebebeb] pb-[28px] pt-[30px]">
            <button aria-label="Rechercher"><svg class="size-9" viewBox="0 0 36 36" fill="none" stroke="#333" stroke-width="2"><circle cx="17" cy="15" r="13"/><path d="M12 11q-2 4 0 7M26 24l3 3"/><path stroke-width="5" stroke-linecap="round" d="M30 28l3 3"/></svg></button>
            <div class="my-[38px] h-[2px] w-5 bg-[#cfcfcf]"></div>
            <div class="flex flex-col gap-11">
                <button aria-label="OCR"><svg class="size-9 overflow-visible" viewBox="0 0 36 36" fill="none" stroke="#333" stroke-width="2"><path d="M4 11V4q0-3 3-3h22q3 0 3 3v7M-1 11h38M4 16v14q0 3 3 3h22q3 0 3-3V16"/><text x="18" y="29" text-anchor="middle" font-family="Roboto" font-weight="bold" font-size="13" fill="#333" stroke="none">OCR</text></svg></button>
                <button aria-label="Convertir"><svg class="size-9" viewBox="0 0 36 36" fill="none" stroke="#333" stroke-width="2"><path d="M24 1H7Q4 1 4 4v28q0 3 3 3h21q3 0 3-3V8zM23 1v7h8"/><path d="M11 22q-2-7 4-9h4q7 2 6 9M11 18q0 8 7 10h3"/><path fill="#333" stroke="none" d="M12 13l6-4v8zM24 27l-6-4v8z"/></svg></button>
                <button aria-label="Protéger"><svg class="size-9" viewBox="0 0 36 36" fill="none" stroke="#333" stroke-width="2"><path d="M15 35H7q-3 0-3-3V4q0-3 3-3h17l7 7v9M23 1v7h8"/><rect x="19" y="23" width="14" height="12" rx="2"/><path d="M22 23v-1q4-6 8 0v1M24 29h4"/></svg></button>
                <button aria-label="Partager"><svg class="size-9" viewBox="0 0 36 36" fill="none" stroke="#333" stroke-width="2"><path d="M14 15H8q-4 0-4 4v11q0 4 4 4h20q4 0 4-4V19q0-4-4-4h-5M18 25V3M10 9l8-7 8 7"/></svg></button>
                <button aria-label="E-mail"><svg class="size-9" viewBox="0 0 36 36" fill="none" stroke="#333" stroke-width="2"><rect x="3" y="5" width="30" height="26" rx="3"/><path d="M7 12l11 7 11-7"/></svg></button>
            </div>
            <div class="my-[38px] h-[2px] w-5 bg-[#cfcfcf]"></div>
            <button aria-label="Enregistrer"><svg class="size-9" viewBox="0 0 36 36" fill="none" stroke="#333" stroke-width="2"><path d="M7 3h19l5 5v20q0 3-3 3H7q-3 0-3-3V6q0-3 3-3zM12 3v6h11V3"/><circle cx="18" cy="20" r="5"/></svg></button>
            <div class="mt-auto flex flex-col gap-11">
                <button aria-label="UPDF AI"><svg class="size-9" viewBox="0 0 36 36" fill="none" stroke-width="4" stroke-linecap="round"><path stroke="#b57cff" d="M6 18A8 8 0 1 1 17 6"/><path stroke="#22aaff" d="M18 7a8 8 0 1 1 12 10"/><path stroke="#3fe09b" d="M29 18a8 8 0 1 1-10 12"/><path stroke="#ffc000" d="M18 29A8 8 0 1 1 5 20"/></svg></button>
                <button aria-label="Commentaires"><svg class="size-9" viewBox="0 0 36 36" fill="none" stroke="#333" stroke-width="2"><path d="M6 3h24q2 0 2 2v20q0 2-2 2h-8l-3 6-3-6H6q-2 0-2-2V5q0-2 2-2zM9 11h18M9 15h18M9 19h11"/></svg></button>
            </div>
        </nav>

        <!-- Active tool marker -->
        <svg class="absolute -left-2 top-[136px] h-[52px] w-5" viewBox="0 0 20 52"><path fill="#343434" d="M7 0Q9 5 14 10Q25 26 14 42Q9 47 7 52z"/><circle cx="4" cy="26" r="4" fill="#b98aff"/></svg>

        <!-- Pointer arrow -->
        <svg class="absolute left-[106px] top-[163px] h-[98px] w-[108px]" viewBox="0 0 108 98" fill="#3f47cc"><path d="M0 1l68 20-17 9 55 64q0 4-4 3L34 48l-7 18z"/></svg>
    </div>
</div>

<script>
    // leader dots, one per 31px step
    document.querySelectorAll("[data-dots]").forEach(el => {
        el.innerHTML = '<span class="w-[31px] shrink-0 text-center">.</span>'.repeat(el.dataset.dots);
    });
    document.querySelectorAll("[data-cells]").forEach(el => {
        el.innerHTML = '<input aria-label="Digit" class="min-w-0 border-l border-dashed border-[#333]">'.repeat(el.dataset.cells);
    });
    document.querySelectorAll("[data-pin]").forEach(el => {
        el.innerHTML = '<input aria-label="PIN" class="min-w-0 border-l-3 border-[#222]">'.repeat(el.dataset.pin);
    });
</script>

</body>
</html>
